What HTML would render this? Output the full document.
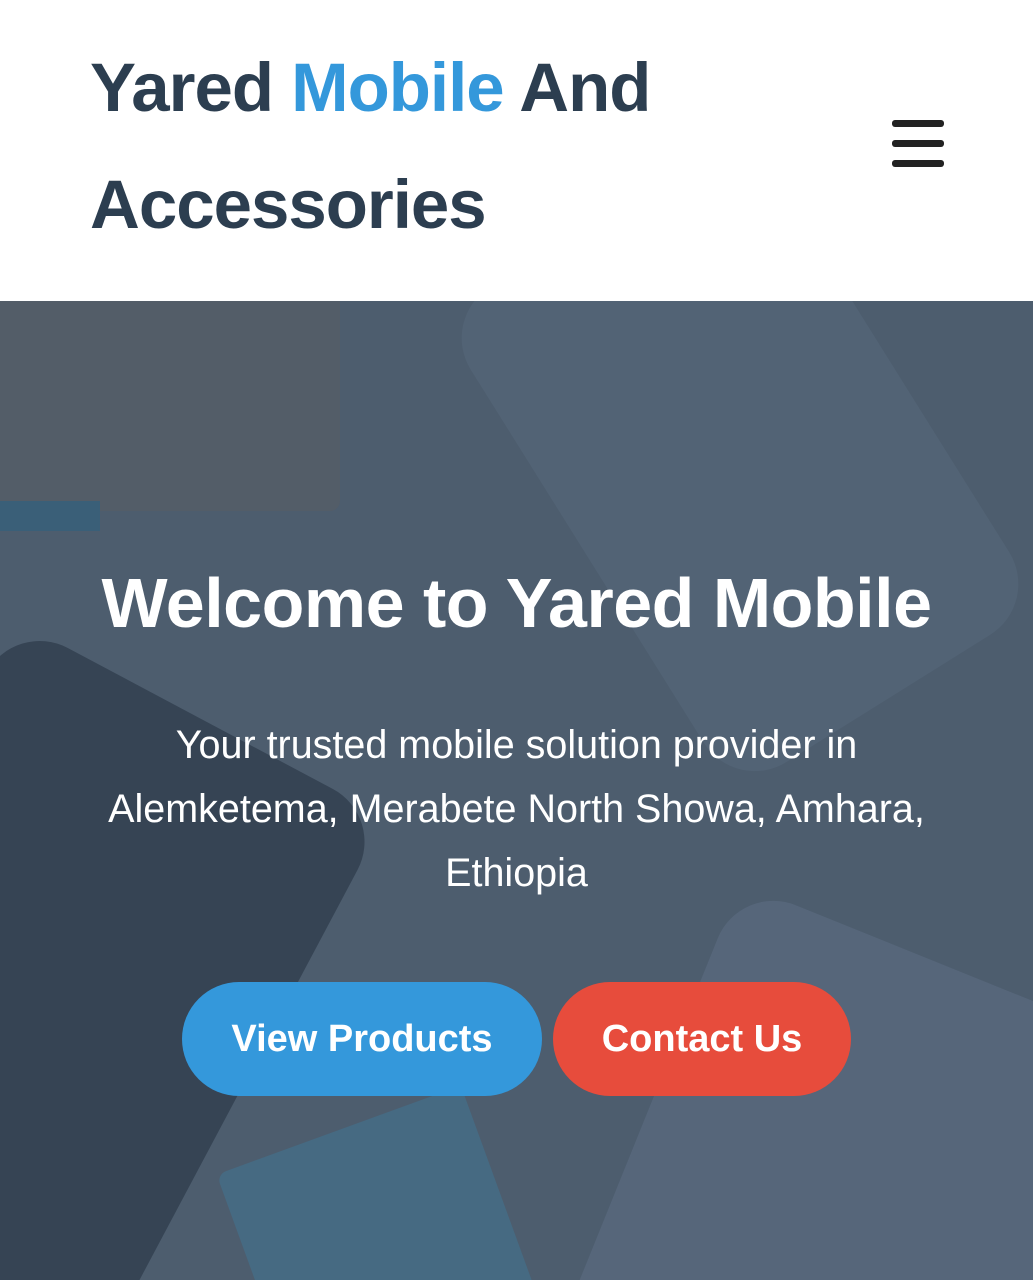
<!DOCTYPE html>
<html><head><meta charset="utf-8"><style>
*{margin:0;padding:0;box-sizing:border-box}
body{width:1033px;height:1280px;overflow:hidden;font-family:"Liberation Sans",Arial,sans-serif;background:#fff}
header{position:absolute;left:0;top:0;width:1033px;height:301px;background:#fff}
.logo{position:absolute;left:90px;top:29px;font-size:69px;font-weight:bold;line-height:117px;color:#2c3e50;letter-spacing:-1px}
.logo span{color:#3498db}
.ham{position:absolute;left:892px;top:120px;width:52px}
.ham div{height:7px;background:#222;border-radius:3px;margin-bottom:13px}
.hero{position:absolute;left:0;top:301px;width:1033px;height:979px;background:#4d5d6e;overflow:hidden}
.sh{position:absolute;border-radius:60px}
.content{position:absolute;left:0;top:0;width:100%;height:979px;overflow:hidden;text-align:center;color:#fff}
h1{position:absolute;top:262px;width:100%;font-size:70px;font-weight:bold;line-height:80px;letter-spacing:-0.5px}
p{position:absolute;top:412px;left:80px;width:873px;font-size:39.5px;line-height:64px}
.btn{position:absolute;top:681px;height:114px;border-radius:57px;font-size:38px;font-weight:bold;line-height:114px;text-align:center;color:#fff}
</style></head><body>
<header>
<div class="logo">Yared <span>Mobile</span> And<br>Accessories</div>
<div class="ham"><div></div><div></div><div></div></div>
</header>
<div class="hero">
<div class="sh" style="left:-20px;top:-10px;width:360px;height:220px;background:#535d68;border-radius:0 0 10px 0"></div>
<div class="sh" style="left:0;top:200px;width:100px;height:30px;background:#3a5f78;border-radius:0"></div>
<div class="sh" style="left:560px;top:-120px;width:360px;height:560px;background:#526375;transform:rotate(-32deg)"></div>
<div class="sh" style="left:-160px;top:380px;width:420px;height:640px;background:#364454;transform:rotate(28deg)"></div>
<div class="sh" style="left:620px;top:640px;width:420px;height:560px;background:#56667a;transform:rotate(22deg)"></div>
<div class="sh" style="left:260px;top:820px;width:260px;height:300px;background:#466a82;transform:rotate(-20deg);border-radius:10px"></div>
<div class="content">
<h1>Welcome to Yared Mobile</h1>
<p>Your trusted mobile solution provider in Alemketema, Merabete North Showa, Amhara, Ethiopia</p>
<div class="btn" style="left:182px;width:360px;background:#3498db">View Products</div>
<div class="btn" style="left:553px;width:298px;background:#e74c3c">Contact Us</div>
</div>
</div>
</body></html>
